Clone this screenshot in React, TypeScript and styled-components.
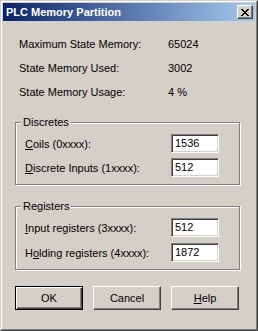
import React from 'react';
import styled, { createGlobalStyle } from 'styled-components';

const GlobalStyle = createGlobalStyle`
  html, body {
    margin: 0;
    padding: 0;
    background: #d4d0c8;
  }
  body {
    font-family: 'Liberation Sans', Arial, sans-serif;
    font-size: 11px;
    color: #000;
  }
`;

const Window = styled.div`
  width: 258px;
  height: 331px;
  box-sizing: border-box;
  background: #d4d0c8;
  border-style: solid;
  border-width: 1px;
  border-color: #d4d0c8 #404040 #404040 #d4d0c8;
  padding: 0;
  display: flex;
  flex-direction: column;
`;

const Frame = styled.div`
  flex: 1;
  display: flex;
  flex-direction: column;
  border-style: solid;
  border-width: 1px;
  border-color: #fff #808080 #808080 #fff;
  padding: 1px;
`;

const TitleBar = styled.div`
  height: 18px;
  display: flex;
  align-items: center;
  justify-content: space-between;
  padding: 0 2px 0 3px;
  background: linear-gradient(to right, #0a246a, #a6caf0);
  color: #fff;
  font-weight: 700;
  font-size: 11px;
`;

const CloseButton = styled.div`
  width: 16px;
  height: 14px;
  box-sizing: border-box;
  background: #d4d0c8;
  border-style: solid;
  border-width: 1px;
  border-color: #fff #404040 #404040 #fff;
  box-shadow: inset -1px -1px 0 #808080;
  display: flex;
  align-items: center;
  justify-content: center;
`;

const Body = styled.div`
  flex: 1;
  display: flex;
  flex-direction: column;
  padding: 11px 15px 0 12px;
`;

const InfoGrid = styled.div`
  display: grid;
  grid-template-columns: 149px 1fr;
  grid-auto-rows: 24px;
  align-items: center;
  padding-left: 4px;
`;

const Group = styled.div<{ top: number }>`
  margin-top: ${({ top }) => top}px;
  border: 1px solid #808080;
  box-shadow: inset 1px 1px 0 #fff, 1px 1px 0 #fff;
  padding: 0 20px 7px 9px;
  display: flex;
  flex-direction: column;
`;

const Caption = styled.span`
  display: block;
  width: fit-content;
  line-height: 13px;
  margin: -7px 0 5px -4px;
  padding: 0 2px;
  background: #d4d0c8;
`;

const Rows = styled.div<{ gap: number }>`
  display: flex;
  flex-direction: column;
  gap: ${({ gap }) => gap}px;
`;

const Row = styled.label`
  display: flex;
  align-items: center;
  justify-content: space-between;
  height: 19px;
`;

const TextBox = styled.div`
  width: 48px;
  height: 19px;
  box-sizing: border-box;
  background: #fff;
  border-style: solid;
  border-width: 1px;
  border-color: #808080 #fff #fff #808080;
  box-shadow: inset 1px 1px 0 #404040, inset -1px -1px 0 #d4d0c8;
  padding: 0 0 0 3px;
  line-height: 17px;
`;

const ButtonBar = styled.div`
  margin-top: 16px;
  display: flex;
  gap: 10px;
`;

const Button = styled.div<{ primary?: boolean }>`
  width: 68px;
  height: 24px;
  box-sizing: border-box;
  display: flex;
  align-items: center;
  justify-content: center;
  background: #d4d0c8;
  border-style: solid;
  border-width: 1px;
  border-color: ${({ primary }) => (primary ? '#000' : '#fff #404040 #404040 #fff')};
  box-shadow: ${({ primary }) =>
    primary
      ? 'inset 1px 1px 0 #fff, inset -1px -1px 0 #404040, inset -2px -2px 0 #808080'
      : 'inset -1px -1px 0 #808080'};
`;

const U = styled.span`
  text-decoration: underline;
`;

function CloseGlyph() {
  return (
    <svg width="8" height="7" viewBox="0 0 8 7" shapeRendering="crispEdges">
      <path d="M0 0h2v1h1v1h2v-1h1v-1h2v1h-1v1h-1v1h-1v1h1v1h1v1h1v1h-2v-1h-1v-1h-2v1h-1v1h-2v-1h1v-1h1v-1h1v-1h-1v-1h-1v-1h-1z" fill="#000" />
    </svg>
  );
}

export default function App() {
  return (
    <>
      <GlobalStyle />
      <Window>
        <Frame>
          <TitleBar>
            <span>PLC Memory Partition</span>
            <CloseButton>
              <CloseGlyph />
            </CloseButton>
          </TitleBar>
          <Body>
            <InfoGrid>
              <span>Maximum State Memory:</span>
              <span>65024</span>
              <span>State Memory Used:</span>
              <span>3002</span>
              <span>State Memory Usage:</span>
              <span>4 %</span>
            </InfoGrid>
            <Group top={18}>
              <Caption>Discretes</Caption>
              <Rows gap={5}>
                <Row>
                  <span><U>C</U>oils (0xxxx):</span>
                  <TextBox>1536</TextBox>
                </Row>
                <Row>
                  <span><U>D</U>iscrete Inputs (1xxxx):</span>
                  <TextBox>512</TextBox>
                </Row>
              </Rows>
            </Group>
            <Group top={21}>
              <Caption>Registers</Caption>
              <Rows gap={6}>
                <Row>
                  <span><U>I</U>nput registers (3xxxx):</span>
                  <TextBox>512</TextBox>
                </Row>
                <Row>
                  <span>H<U>o</U>lding registers (4xxxx):</span>
                  <TextBox>1872</TextBox>
                </Row>
              </Rows>
            </Group>
            <ButtonBar>
              <Button primary>OK</Button>
              <Button>Cancel</Button>
              <Button><span><U>H</U>elp</span></Button>
            </ButtonBar>
          </Body>
        </Frame>
      </Window>
    </>
  );
}
